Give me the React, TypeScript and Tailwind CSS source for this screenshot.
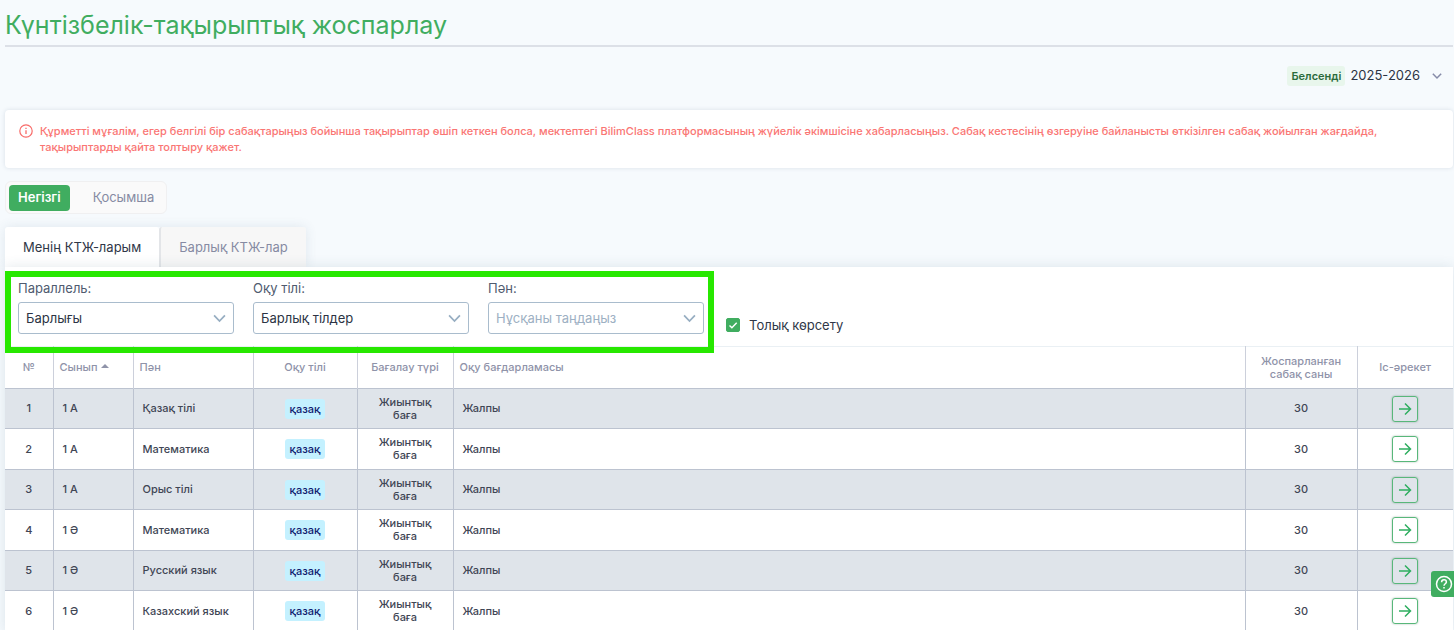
import React, { useState } from 'react'

interface Plan {
  id: number
  grade: string
  subject: string
}

interface FilterSelectProps {
  id: string
  label: string
  options: string[]
  placeholder?: boolean
}

const plans: Plan[] = [
  { id: 1, grade: '1 А', subject: 'Қазақ тілі' },
  { id: 2, grade: '1 А', subject: 'Математика' },
  { id: 3, grade: '1 А', subject: 'Орыс тілі' },
  { id: 4, grade: '1 Ә', subject: 'Математика' },
  { id: 5, grade: '1 Ә', subject: 'Русский язык' },
  { id: 6, grade: '1 Ә', subject: 'Казахский язык' },
]

function Chevron({ className }: { className: string }) {
  return (
    <svg viewBox="0 0 12 8" fill="none" stroke="currentColor" className={className}>
      <path d="M1 1.2 6 6.4l5-5.2" />
    </svg>
  )
}

function FilterSelect({ id, label, options, placeholder }: FilterSelectProps) {
  return (
    <div className="w-[216px]">
      <label htmlFor={id} className="block text-[13px] leading-5 text-[#4f5b70]">
        {label}
      </label>
      <div className="relative mt-1">
        <select
          id={id}
          className={`h-8 w-full appearance-none rounded-[3px] border border-[#a9bccd] bg-white pl-[7px] pr-8 pt-px text-[13px] ${
            placeholder ? 'text-[#9db0c3]' : 'text-[#2c3444]'
          }`}
        >
          {options.map(option => (
            <option key={option}>{option}</option>
          ))}
        </select>
        <Chevron className="pointer-events-none absolute right-2 top-3 h-[9px] w-[13px] stroke-[1.6] text-[#97aec2]" />
      </div>
    </div>
  )
}

export default function App() {
  const [showAll, setShowAll] = useState(true)

  return (
    <div className="h-screen overflow-hidden bg-[#f6fafd] pl-[5px] pr-px font-[Inter,'Noto_Sans',sans-serif] text-[#2f3747]">
      <h1 className="border-b-2 border-[#dce0e7] pb-1 pt-[9px] text-[25px] leading-8 text-[#40ad60]">
        Күнтізбелік-тақырыптық жоспарлау
      </h1>

      <div className="flex h-[63px] items-center justify-end pb-[6px] pr-[11px]">
        <span className="rounded-[3px] bg-[#e8f6ec] px-1 text-[11px] font-semibold leading-5 text-[#2b6b3c]">Белсенді</span>
        <button className="ml-[5px] flex items-center gap-3 text-[13px] text-[#2c3444]">
          2025-2026
          <Chevron className="h-2 w-[10px] stroke-[1.8] text-[#868ba8]" />
        </button>
      </div>

      <div className="flex items-start gap-[7px] rounded-[4px] bg-white pb-[13px] pl-[14px] pr-8 pt-[13px] shadow-[0_0_4px_rgba(60,90,120,0.16)]">
        <svg viewBox="0 0 14 14" fill="none" stroke="currentColor" className="mt-px h-[14px] w-[14px] shrink-0 text-[#f86b69]">
          <circle cx="7" cy="7" r="6.2" strokeWidth="1.2" />
          <path d="M7 6.3v3.8M7 3.7v1.3" strokeWidth="1.3" />
        </svg>
        <p className="text-[11px] font-medium leading-4 text-[#fa7674]">
          Құрметті мұғалім, егер белгілі бір сабақтарыңыз бойынша тақырыптар өшіп кеткен болса, мектептегі BilimClass платформасының жүйелік әкімшісіне хабарласыңыз. Сабақ кестесінің өзгеруіне байланысты өткізілген сабақ жойылған жағдайда, тақырыптарды қайта толтыру қажет.
        </p>
      </div>

      <div className="mt-[13px] flex h-[33px] w-fit items-center rounded-md border border-[#f0f0f1] bg-[#fafafa] px-[3px]">
        <button className="h-[26px] rounded-[4px] bg-[#40ad60] px-[9px] text-[13px] font-semibold text-white">Негізгі</button>
        <button className="ml-[14px] h-[26px] px-[9px] pt-px text-[13px] text-[#868ba3]">Қосымша</button>
      </div>

      <div className="mt-[13px] flex">
        <div className="flex rounded-t-[4px] shadow-[0_0_12px_rgba(60,90,120,0.12)]">
          <button className="h-10 rounded-t-[3px] bg-white px-[18px] pt-[2px] text-[13px]">Менің КТЖ-ларым</button>
          <button className="h-10 rounded-t-[3px] border-l-2 border-[#e3e5e8] bg-[#f7f7f7] px-[18px] pt-[2px] text-[13px] text-[#868ba3]">
            Барлық КТЖ-лар
          </button>
        </div>
      </div>

      <main className="relative bg-white shadow-[0_0_12px_rgba(60,90,120,0.14)]">
        <div className="flex h-[79px] items-start">
          <div className="relative flex gap-[19px] pb-[13px] pl-[13px] pr-[10px] pt-[11px]">
            <FilterSelect id="grade" label="Параллель:" options={['Барлығы']} />
            <FilterSelect id="language" label="Оқу тілі:" options={['Барлық тілдер']} />
            <FilterSelect id="subject" label="Пән:" options={['Нұсқаны таңдаңыз']} placeholder />
            <div className="pointer-events-none absolute inset-x-0 -bottom-[6px] top-1 border-6 border-[#27e800]" />
          </div>
          <label className="ml-3 mt-12 flex items-center gap-[9px] text-[13px] leading-5">
            <span className="relative flex h-[14px] w-[14px]">
              <input
                type="checkbox"
                checked={showAll}
                onChange={() => setShowAll(!showAll)}
                className="h-[14px] w-[14px] appearance-none rounded-[2px] border border-[#40ad60] checked:bg-[#40ad60]"
              />
              {showAll && (
                <svg viewBox="0 0 14 14" fill="none" stroke="white" strokeWidth="1.4" className="pointer-events-none absolute inset-0">
                  <path d="m3.5 7.5 2.4 2.3 4.8-5" />
                </svg>
              )}
            </span>
            Толық көрсету
          </label>
        </div>

        <table className="w-full table-fixed border-collapse border-t border-[#eaf0f4] text-center text-[11px] leading-[13px] [&_td+td]:border-l [&_td]:border-[#bcc3d0] [&_th+th]:border-l [&_th]:border-[#ccd0db]">
          <colgroup>
            <col className="w-12" />
            <col className="w-20" />
            <col className="w-[120px]" />
            <col className="w-[104px]" />
            <col className="w-24" />
            <col />
            <col className="w-28" />
            <col className="w-24" />
          </colgroup>
          <thead>
            <tr className="h-[42px] text-[#8f93a9] [&>th]:font-medium">
              <th>№</th>
              <th className="pl-[6px] text-left">
                <span className="flex items-center gap-1">
                  Сынып
                  <svg viewBox="0 0 8 4" className="mb-1 h-1 w-2 fill-current">
                    <path d="M4 0 8 4H0Z" />
                  </svg>
                </span>
              </th>
              <th className="pl-[6px] text-left">Пән</th>
              <th>Оқу тілі</th>
              <th>Бағалау түрі</th>
              <th className="pl-[6px] text-left">Оқу бағдарламасы</th>
              <th className="px-3">Жоспарланған сабақ саны</th>
              <th>Іс-әрекет</th>
            </tr>
          </thead>
          <tbody className="font-medium text-[#3f4655]">
            {plans.map(plan => (
              <tr key={plan.id} className="border-t border-[#bcc3d0] odd:h-10 odd:bg-[#dfe4ea] even:h-[41px]">
                <td>{plan.id}</td>
                <td className="pl-[9px] text-left">{plan.grade}</td>
                <td className="pl-[9px] text-left">{plan.subject}</td>
                <td>
                  <span className="mx-auto block w-fit rounded-[3px] bg-[#c4f1ff] px-[5px] leading-5 text-[#10206f]">қазақ</span>
                </td>
                <td className="px-4">Жиынтық баға</td>
                <td className="pl-[9px] text-left">Жалпы</td>
                <td>30</td>
                <td>
                  <button
                    aria-label="Ашу"
                    className="mx-auto flex h-[26px] w-[26px] items-center justify-center rounded-[3px] border border-[#58b77a] text-[#2fae60] shadow-[0_0_2px_rgba(30,80,50,0.4)]"
                  >
                    <svg viewBox="0 0 14 14" fill="none" stroke="currentColor" strokeWidth="1.5" className="h-[14px] w-[14px]">
                      <path d="M1 7h11.5M7 1.5 12.5 7 7 12.5" />
                    </svg>
                  </button>
                </td>
              </tr>
            ))}
          </tbody>
        </table>
      </main>

      <button
        aria-label="Көмек"
        className="fixed bottom-[33px] right-0 flex h-[26px] w-[23px] items-center justify-center rounded-l-[3px] bg-[#40ad60] pl-[3px] text-white"
      >
        <svg viewBox="0 0 18 18" fill="none" stroke="currentColor" strokeWidth="1.5" className="h-[18px] w-[18px] shrink-0">
          <circle cx="9" cy="9" r="7.5" />
          <path d="M6.6 7.2c0-1.5 1.1-2.4 2.4-2.4s2.4.9 2.4 2.2c0 1.7-2.4 1.8-2.4 3.7M9 12v1.5" />
        </svg>
      </button>
    </div>
  )
}
